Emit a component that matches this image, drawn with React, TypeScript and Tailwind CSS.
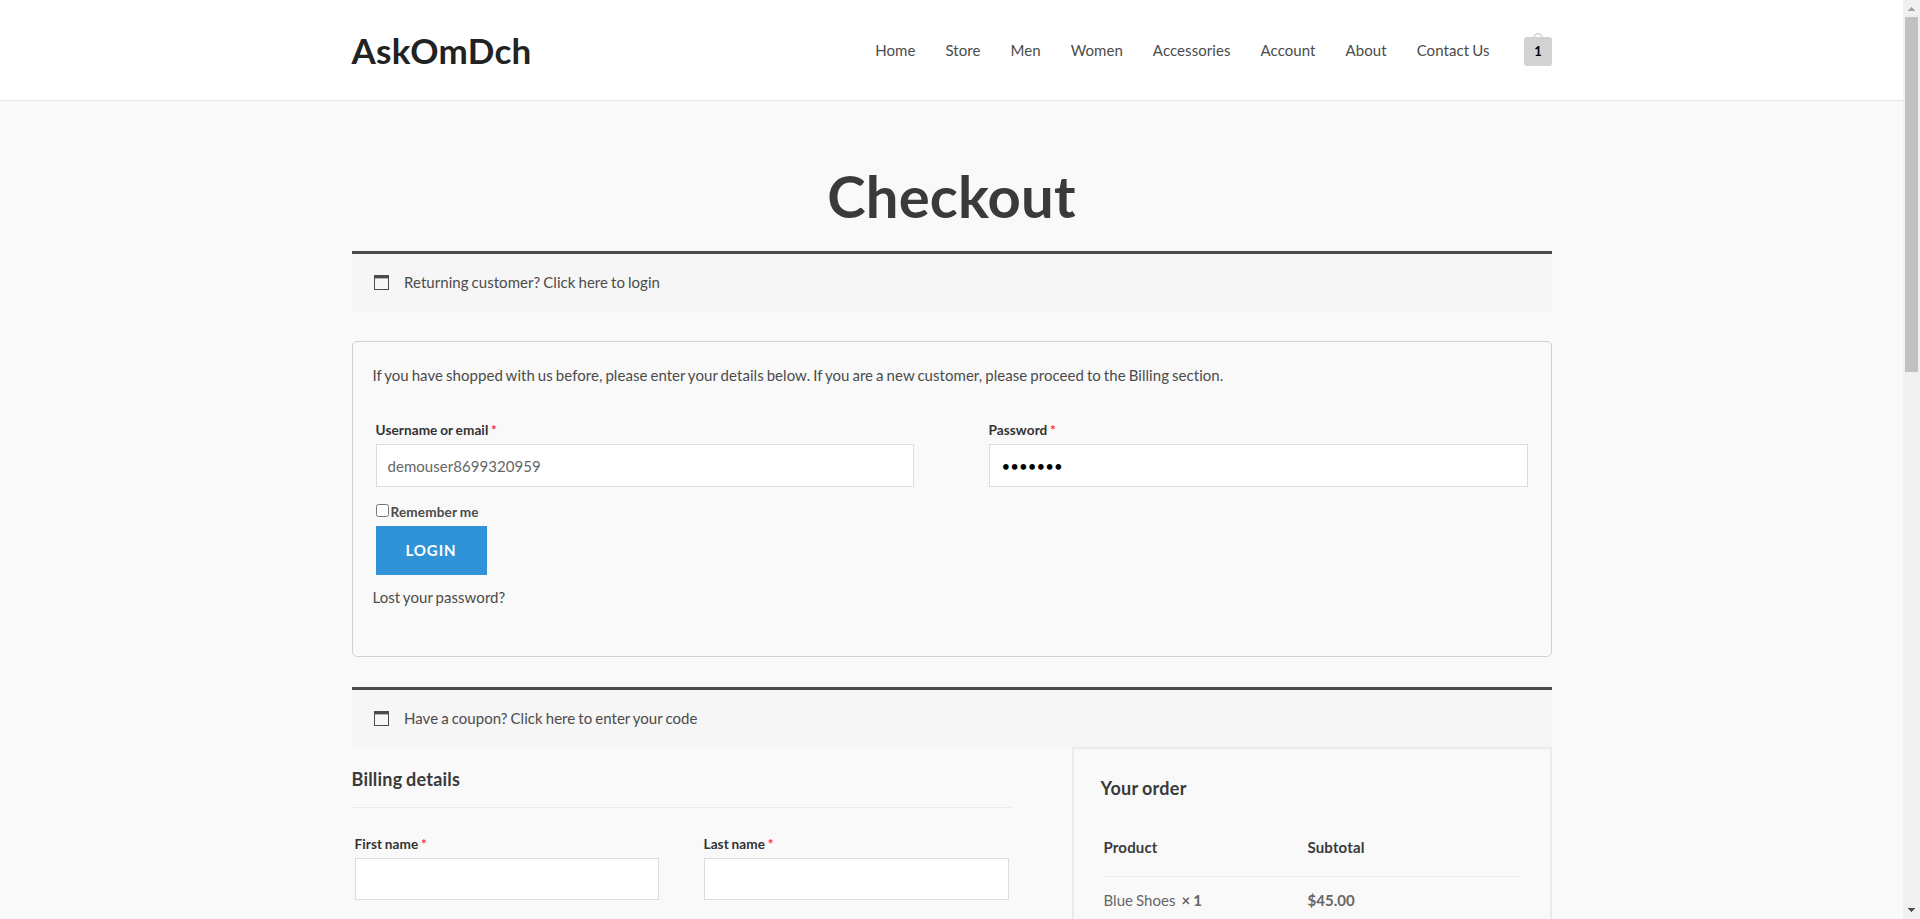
import React from "react";

const navItems = ["Home", "Store", "Men", "Women", "Accessories", "Account", "About", "Contact Us"];

function Header() {
  return (
    <header className="h-[101px] border-b border-[#e6e6e6] bg-white">
      <div className="mx-auto flex h-[100px] w-[1200px] items-center justify-between">
        <a className="text-[35px] leading-[42px] font-bold tracking-[0.3px] text-[#222222]">AskOmDch</a>
        <div className="flex items-center">
          <nav className="flex gap-[30px] pr-[34px] text-[15px] leading-6 tracking-[0.07px]">
            {navItems.map((item) => (
              <a key={item}>{item}</a>
            ))}
          </nav>
          <div className="relative mt-[3px] flex h-[29px] w-7 items-center justify-center rounded-[3px] bg-[#d2d2d2] pt-px pl-px text-[13px] font-bold text-black">
            <svg width="10" height="5" viewBox="0 0 10 5" className="absolute -top-1 left-[9px]" fill="none" stroke="#d2d2d2" strokeWidth="1.6">
              <path d="M1 5V4.5a4 3.7 0 0 1 8 0V5" />
            </svg>
            1
          </div>
        </div>
      </div>
    </header>
  );
}

function Notice({ text }: { text: string }) {
  return (
    <div className="flex h-[60px] items-center border-t-[3px] border-[#4b4b4b] bg-[#f6f6f6] pl-[22px] text-[15px] leading-6">
      <svg width="15" height="15" viewBox="0 0 15 15" className="mr-[15.5px]" fill="#4b4b4b" shapeRendering="crispEdges">
        <path d="M0 0h15v15H0zM1 3v11h13V3z" fillRule="evenodd" />
        <path d="M1 3h13v1H1z" fill="#b4b4b4" />
      </svg>
      <span className="pb-[2px]">{text}</span>
    </div>
  );
}

type FieldProps = { label: string; value?: string; type?: string; className: string; inputClass: string };

function Field({ label, value, type = "text", className, inputClass }: FieldProps) {
  return (
    <div className={className}>
      <label className="block text-[13.6px] leading-[22px] font-bold tracking-[0.08px] text-[#333333] [word-spacing:-0.7px]">
        {label} <span className="text-[#ff3344]">*</span>
      </label>
      <input
        type={type}
        defaultValue={value}
        className={`mt-[3px] block w-full border border-[#dddddd] bg-white text-[15px] tracking-[0.04px] outline-none ${inputClass}`}
      />
    </div>
  );
}

function LoginForm() {
  return (
    <section className="mt-[30px] h-[316px] rounded-[5px] border border-[#cfcfcf] px-5 pt-[21px] text-[15px] leading-6">
      <p>
        If you have shopped with us before, please enter your details below. If you are a new customer, please proceed to the
        Billing section.
      </p>
      <div className="mt-8 flex justify-between pr-[3px] pl-[3px]">
        <Field className="w-[538px]" inputClass="h-[43px] px-[11px] text-[#666666]" label="Username or email" value="demouser8699320959" />
        <Field className="w-[539px]" inputClass="h-[43px] px-3 text-black" label="Password" value="abcdefg" type="password" />
      </div>
      <div className="mt-[14px] ml-[3px]">
        <label className="flex h-[22px] items-center text-[13.6px] leading-[22px] font-bold tracking-[0.12px] text-[#4b4b4b] [word-spacing:-0.4px]">
          <input type="checkbox" className="mr-[2px] mb-[3px] size-[13px]" />
          Remember me
        </label>
        <button className="mt-[3px] block h-[49px] w-[111px] bg-[#3193d7] text-[15px] leading-[15px] font-bold tracking-[0.9px] text-white">
          LOGIN
        </button>
      </div>
      <p className="mt-[10px]">Lost your password?</p>
    </section>
  );
}

function Billing() {
  return (
    <section className="w-[660px] pt-[18px]">
      <h3 className="h-[43px] border-b border-[#ebebeb] text-[18px] leading-7 font-bold tracking-[0.21px] text-[#3a3a3a]">Billing details</h3>
      <div className="mt-[25px] flex justify-between px-[3px]">
        <Field className="w-[304px]" inputClass="h-[42px]" label="First name" />
        <Field className="w-[305px]" inputClass="h-[42px]" label="Last name" />
      </div>
    </section>
  );
}

function Order() {
  return (
    <section className="h-[300px] w-[480px] border-2 border-[#ebebeb] px-[27px] pt-[25px]">
      <h3 className="text-[18px] leading-7 font-bold tracking-[0.3px] text-[#3a3a3a]">Your order</h3>
      <div className="mx-[3px] mt-[33px] grid h-[42px] grid-cols-[204px_1fr] border-b border-[#ebebeb] text-[15px] leading-6 font-bold tracking-[0.16px] text-[#3a3a3a]">
        <span>Product</span>
        <span>Subtotal</span>
      </div>
      <div className="mx-[3px] mt-[11px] grid grid-cols-[204px_1fr] text-[15px] leading-6 text-[#666666]">
        <span>
          Blue Shoes&nbsp; <strong>×&nbsp;1</strong>
        </span>
        <span className="font-bold">$45.00</span>
      </div>
    </section>
  );
}

function Scrollbar() {
  return (
    <div className="flex w-[17px] flex-col items-center justify-between bg-[#f0f0f0]">
      <div className="flex flex-col items-center">
        <svg width="17" height="17" viewBox="0 0 17 17" fill="#a3a3a3" shapeRendering="crispEdges">
          <path d="M8 7h1v1h1v1h1v1h1v1H5v-1h1v-1h1v-1h1z" />
        </svg>
        <div className="h-[355px] w-[13px] bg-[#c1c1c1]" />
      </div>
      <svg width="17" height="17" viewBox="0 0 17 17" fill="#505050" shapeRendering="crispEdges">
        <path d="M5 6h7v1h-1v1h-1v1H9v1H8V9H7V8H6V7H5z" />
      </svg>
    </div>
  );
}

export default function App() {
  return (
    <div className="flex h-[919px] overflow-hidden bg-[#f9f9f9] font-['Lato',sans-serif] tracking-[0.05px] text-[#4b4b4b] [word-spacing:-0.9px]">
      <div className="h-[919px] flex-1 overflow-hidden">
        <Header />
        <main className="mx-auto w-[1200px]">
          <h1 className="pt-[59px] pb-[19px] text-center text-[58px] leading-[72px] font-bold tracking-[0.15px] text-[#3a3a3a]">Checkout</h1>
          <Notice text="Returning customer? Click here to login" />
          <LoginForm />
          <div className="mt-[30px]">
            <Notice text="Have a coupon? Click here to enter your code" />
          </div>
          <div className="flex items-start justify-between">
            <Billing />
            <Order />
          </div>
        </main>
      </div>
      <Scrollbar />
    </div>
  );
}
